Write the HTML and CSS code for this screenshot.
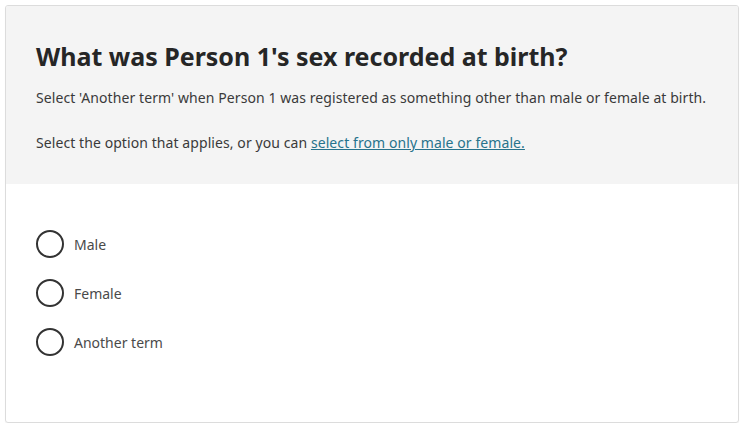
FILE: index.html
```html
<!DOCTYPE html>
<html lang="en">
<head>
<meta charset="utf-8">
<link rel="stylesheet" href="styles.css">
</head>
<body>
<div class="card">
  <div class="header">
    <h1 class="title">What was Person 1's sex recorded at birth?</h1>
    <p class="desc">Select 'Another term' when Person 1 was registered as something other than male or female at birth.</p>
    <p class="desc">Select the option that applies, or you can <a href="#" class="link">select from only male or female.</a></p>
  </div>
  <div class="options">
    <label class="option"><span class="radio"></span><span class="label">Male</span></label>
    <label class="option"><span class="radio"></span><span class="label">Female</span></label>
    <label class="option"><span class="radio"></span><span class="label">Another term</span></label>
  </div>
</div>
</body>
</html>
```

FILE: styles.css
```css
* { box-sizing: border-box; }
html, body { margin: 0; padding: 0; background: #ffffff; }
body {
  font-family: "Noto Sans", "Open Sans", sans-serif;
  color: #333333;
  padding: 5px 0 0 5px;
}
.card {
  width: 734px;
  height: 418px;
  border: 1px solid #dcdcdc;
  border-radius: 3px;
  overflow: hidden;
  box-shadow: 0 1px 1px rgba(0,0,0,0.06);
}
.header {
  background: #f4f4f4;
  height: 178px;
  padding: 35px 30px 0 30px;
}
.title {
  margin: 0;
  font-size: 25px;
  font-weight: 700;
  color: #262626;
  line-height: 30px;
}
.desc {
  margin: 0;
  font-size: 14px;
  letter-spacing: 0.08px;
  line-height: 20px;
  color: #3a3a3a;
}
.title + .desc { margin-top: 17px; }
.desc + .desc { margin-top: 25px; }
.link { color: #27738c; text-decoration: underline; }
.options {
  padding: 46px 30px 0 30px;
  display: flex;
  flex-direction: column;
  gap: 21px;
}
.option {
  display: flex;
  align-items: center;
  gap: 10px;
  height: 28px;
}
.radio {
  width: 28px;
  height: 28px;
  border: 2px solid #333333;
  border-radius: 50%;
  flex: none;
}
.label {
  font-size: 14px;
  color: #4a4a4a;
}
```
